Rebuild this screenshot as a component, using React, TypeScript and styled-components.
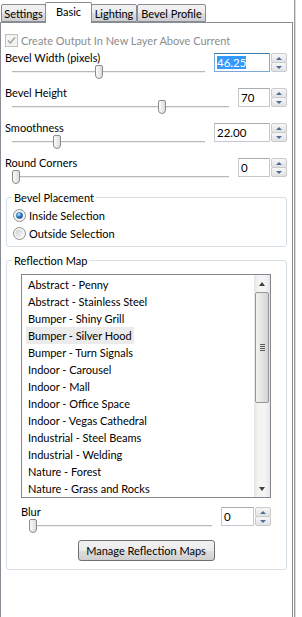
import React from "react";
import styled, { createGlobalStyle } from "styled-components";

const GlobalStyle = createGlobalStyle`
  html, body {
    margin: 0;
    padding: 0;
    background: #fff;
  }
  body {
    font-family: Lato, "Liberation Sans", Arial, sans-serif;
    font-size: 11px;
    color: #000;
  }
`;

const Window = styled.div`
  width: 302px;
  height: 617px;
  display: flex;
  overflow: hidden;
  background: #fff;
`;

const Main = styled.div`
  width: 294px;
  display: flex;
  flex-direction: column;
`;

const Edge = styled.div`
  width: 8px;
  display: flex;
  padding-left: 1px;

  span {
    width: 1px;
    background: #9c9c9c;
  }
  span + span {
    background: #dadada;
  }
`;

const TabStrip = styled.div`
  height: 22px;
  display: flex;
  align-items: flex-end;
  padding-left: 1px;
  position: relative;
  z-index: 1;
`;

const Tab = styled.div<{ $active?: boolean; $w: number }>`
  box-sizing: border-box;
  width: ${p => p.$w}px;
  height: ${p => (p.$active ? 21 : 18)}px;
  margin-bottom: ${p => (p.$active ? -1 : 0)}px;
  margin-left: ${p => (p.$active ? -1 : 0)}px;
  margin-right: ${p => (p.$active ? -1 : 0)}px;
  border: 1px solid #898c95;
  border-bottom: ${p => (p.$active ? "none" : "1px solid #898c95")};
  border-radius: 2px 2px 0 0;
  background: ${p =>
    p.$active ? "#fff" : "linear-gradient(#f2f2f2 0%, #ebebeb 50%, #dddddd 51%, #cfcfcf 100%)"};
  text-align: center;
  white-space: nowrap;
  line-height: ${p => (p.$active ? 18 : 17)}px;
  position: relative;
  z-index: ${p => (p.$active ? 2 : 1)};
`;

const Panel = styled.div`
  flex: 1;
  border: 1px solid #898c95;
  border-bottom: none;
  padding: 10px 5px 0 4px;
  display: flex;
  flex-direction: column;
`;

const CheckRow = styled.div`
  height: 15px;
  display: flex;
  align-items: center;
  gap: 3px;
  color: #8d8d8d;
  margin-bottom: 2px;
`;

const FieldRow = styled.div`
  height: 35px;
  display: flex;
  gap: 8px;
  flex-shrink: 0;
`;

const FieldMain = styled.div`
  flex: 1;
  display: flex;
  flex-direction: column;
`;

const FieldLabel = styled.div`
  height: 15px;
  line-height: 15px;
  white-space: nowrap;
`;

const Slider = styled.div<{ $inset: number }>`
  position: relative;
  height: 14px;
  margin: 0 1px 0 ${p => p.$inset}px;
`;

const Track = styled.div`
  position: absolute;
  left: 0;
  right: 0;
  top: 6px;
  height: 1px;
  background: #b9b9b9;
  border-bottom: 1px solid #eeeeee;
`;

const Thumb = styled.div<{ $pos: number }>`
  position: absolute;
  top: 0;
  left: calc(${p => p.$pos * 100}% - 4px);
  width: 8px;
  height: 14px;
  box-sizing: border-box;
  border: 1px solid #8b8b8b;
  border-radius: 2px 2px 4px 4px;
  background: linear-gradient(90deg, #fbfbfb, #dcdcdc);
`;

const SpinGroup = styled.div`
  display: flex;
  gap: 1px;
  margin-top: 3px;
  height: 19px;
`;

const NumBox = styled.div<{ $w: number; $focused?: boolean }>`
  box-sizing: border-box;
  width: ${p => p.$w}px;
  height: 19px;
  border: 1px solid ${p => (p.$focused ? "#7ea9d6" : "#c4c8cf")};
  border-top-color: ${p => (p.$focused ? "#3d7bad" : "#abadb3")};
  padding-left: 2px;
  line-height: 17px;
  font-size: 11.5px;
  background: #fff;

  mark {
    background: #3399ff;
    color: #fff;
  }
`;

const SpinButtons = styled.div`
  width: 16px;
  display: flex;
  flex-direction: column;
`;

const SpinBtn = styled.div<{ $down?: boolean }>`
  flex: 1;
  box-sizing: border-box;
  border: 1px solid #c9cbce;
  margin-top: ${p => (p.$down ? -1 : 0)}px;
  border-radius: 2px;
  background: linear-gradient(#f7f7f7, #e2e2e2);
  display: flex;
  align-items: center;
  justify-content: center;

  &::after {
    content: "";
    border-left: 3px solid transparent;
    border-right: 3px solid transparent;
    ${p =>
      p.$down ? "border-top: 3px solid #4e6a98;" : "border-bottom: 3px solid #4e6a98;"}
  }
`;

const Group = styled.fieldset<{ $pad: number }>`
  margin: 0 0 0 1px;
  padding: 0 ${p => p.$pad + 1}px 0 ${p => p.$pad}px;
  border: 1px solid #d5dfe5;
  border-radius: 3px;
  flex-shrink: 0;

  & + & {
    margin-top: 6px;
  }

  legend {
    line-height: 15px;
    padding: 0 2px;
    margin-left: ${p => 5 - p.$pad}px;
  }
`;

const RadioList = styled.div`
  padding: 1px 0 4px;
`;

const RadioRow = styled.div`
  height: 18px;
  display: flex;
  align-items: center;
  gap: 3px;
  margin-left: -1px;
`;

const ListBox = styled.div`
  margin-top: 6px;
  height: 224px;
  box-sizing: border-box;
  border: 1px solid #828790;
  display: flex;
`;

const Items = styled.div`
  flex: 1;
  padding-top: 1px;
  overflow: hidden;
`;

const Item = styled.div<{ $hot?: boolean }>`
  height: 17px;
  line-height: 17px;
  width: fit-content;
  margin-left: 4px;
  padding: 0 2px;
  background: ${p => (p.$hot ? "#ebebeb" : "transparent")};
  white-space: nowrap;
`;

const ScrollBar = styled.div`
  width: 16px;
  display: flex;
  flex-direction: column;
  background: linear-gradient(90deg, #e6e6e6, #f4f4f4 30%, #f4f4f4 70%, #e6e6e6);
`;

const ScrollArrow = styled.div<{ $down?: boolean }>`
  height: 17px;
  display: flex;
  align-items: center;
  justify-content: center;

  &::after {
    content: "";
    border-left: 3.5px solid transparent;
    border-right: 3.5px solid transparent;
    ${p =>
      p.$down ? "border-top: 4px solid #404040;" : "border-bottom: 4px solid #404040;"}
  }
`;

const ScrollTrack = styled.div`
  flex: 1;
  padding: 0 1px;
`;

const ScrollThumb = styled.div`
  height: 111px;
  box-sizing: border-box;
  border: 1px solid #979797;
  border-radius: 2px;
  background: linear-gradient(90deg, #f2f2f2, #e4e4e4 50%, #d3d3d3);
  display: flex;
  flex-direction: column;
  align-items: center;
  justify-content: center;
  gap: 1px;

  i {
    width: 5px;
    height: 1px;
    background: #5a5a5a;
  }
`;

const Button = styled.div`
  width: 137px;
  height: 21px;
  box-sizing: border-box;
  margin: 1px auto 8px;
  border: 1px solid #707070;
  border-radius: 3px;
  background: linear-gradient(#f2f2f2 0%, #ebebeb 50%, #dddddd 51%, #cfcfcf 100%);
  text-align: center;
  line-height: 19px;
`;

const BlurBlock = styled.div`
  margin-top: 6px;
`;

function CheckBox() {
  return (
    <svg width="13" height="13" viewBox="0 0 13 13">
      <rect x="0.5" y="0.5" width="12" height="12" fill="#f4f4f4" stroke="#c0c0c0" />
      <path d="M3 6.5 L5.3 9 L10 3.5" fill="none" stroke="#a6a6a6" strokeWidth="1.6" />
    </svg>
  );
}

function Radio({ on }: { on?: boolean }) {
  return (
    <svg width="13" height="13" viewBox="0 0 13 13">
      <defs>
        <linearGradient id="rbg" x1="0" y1="0" x2="1" y2="1">
          <stop offset="0" stopColor="#d0d0d0" />
          <stop offset="1" stopColor="#fafafa" />
        </linearGradient>
        <radialGradient id="rdot" cx="0.4" cy="0.35" r="0.7">
          <stop offset="0" stopColor="#d4f0ff" />
          <stop offset="0.45" stopColor="#2f8ad8" />
          <stop offset="1" stopColor="#0c3b73" />
        </radialGradient>
      </defs>
      <circle cx="6.5" cy="6.5" r="6" fill="#f6f6f6" stroke="#8e8f8f" />
      <circle cx="6.5" cy="6.5" r="4" fill="url(#rbg)" />
      {on && <circle cx="6.5" cy="6.5" r="3.3" fill="url(#rdot)" />}
    </svg>
  );
}

type FieldProps = {
  label: string;
  value: string;
  pos: number;
  box: number;
  inset?: number;
  focused?: boolean;
};

function Field({ label, value, pos, box, inset = 7, focused }: FieldProps) {
  return (
    <FieldRow>
      <FieldMain>
        <FieldLabel>{label}</FieldLabel>
        <Slider $inset={inset}>
          <Track />
          <Thumb $pos={pos} />
        </Slider>
      </FieldMain>
      <SpinGroup>
        <NumBox $w={box} $focused={focused}>
          {focused ? <mark>{value}</mark> : value}
        </NumBox>
        <SpinButtons>
          <SpinBtn />
          <SpinBtn $down />
        </SpinButtons>
      </SpinGroup>
    </FieldRow>
  );
}

const maps = [
  "Abstract - Penny",
  "Abstract - Stainless Steel",
  "Bumper - Shiny Grill",
  "Bumper - Silver Hood",
  "Bumper - Turn Signals",
  "Indoor - Carousel",
  "Indoor - Mall",
  "Indoor - Office Space",
  "Indoor - Vegas Cathedral",
  "Industrial - Steel Beams",
  "Industrial - Welding",
  "Nature - Forest",
  "Nature - Grass and Rocks",
];

export default function App() {
  return (
    <Window>
      <GlobalStyle />
      <Main>
        <TabStrip>
          <Tab $w={45}>Settings</Tab>
          <Tab $w={47} $active>Basic</Tab>
          <Tab $w={46}>Lighting</Tab>
          <Tab $w={69}>Bevel Profile</Tab>
        </TabStrip>
        <Panel>
          <CheckRow>
            <CheckBox />
            Create Output In New Layer Above Current
          </CheckRow>
          <Field label="Bevel Width (pixels)" value="46.25" pos={0.451} box={56} focused />
          <Field label="Bevel Height" value="70" pos={0.691} box={32} />
          <Field label="Smoothness" value="22.00" pos={0.233} box={56} />
          <Field label="Round Corners" value="0" pos={0.02} box={32} />

          <Group $pad={7}>
            <legend>Bevel Placement</legend>
            <RadioList>
              <RadioRow>
                <Radio on />
                Inside Selection
              </RadioRow>
              <RadioRow>
                <Radio />
                Outside Selection
              </RadioRow>
            </RadioList>
          </Group>

          <Group $pad={14}>
            <legend>Reflection Map</legend>
            <ListBox>
              <Items>
                {maps.map(m => (
                  <Item key={m} $hot={m === "Bumper - Silver Hood"}>
                    {m}
                  </Item>
                ))}
              </Items>
              <ScrollBar>
                <ScrollArrow />
                <ScrollTrack>
                  <ScrollThumb>
                    <i />
                    <i />
                    <i />
                    <i />
                  </ScrollThumb>
                </ScrollTrack>
                <ScrollArrow $down />
              </ScrollBar>
            </ListBox>
            <BlurBlock>
              <Field label="Blur" value="0" pos={0.016} box={33} inset={9} />
            </BlurBlock>
            <Button>Manage Reflection Maps</Button>
          </Group>
        </Panel>
      </Main>
      <Edge>
        <span />
        <span />
      </Edge>
    </Window>
  );
}
